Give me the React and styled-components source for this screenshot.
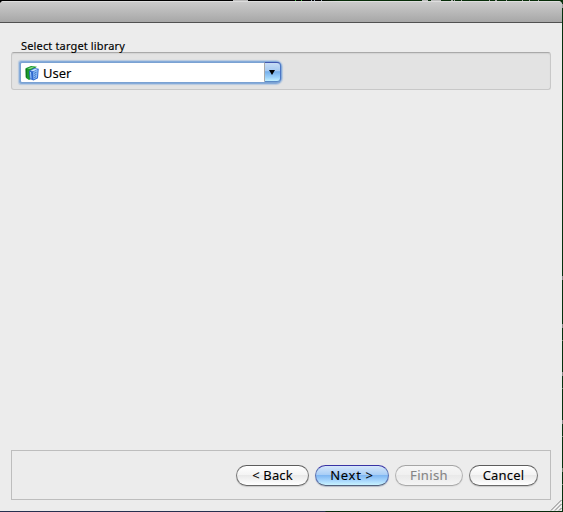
import React from "react";
import styled, { createGlobalStyle, css } from "styled-components";

const GlobalStyle = createGlobalStyle`
  * { box-sizing: border-box; }
  body { margin: 0; overflow: hidden; font-family: "Noto Sans", "Open Sans", sans-serif; color: #000; }
`;

const Desktop = styled.div`
  width: 563px;
  height: 512px;
  padding: 1px 1px 1px 0;
  background:
    linear-gradient(#888, #888) 562px 276px / 1px 4px no-repeat,
    linear-gradient(#888, #888) 562px 324px / 1px 4px no-repeat,
    linear-gradient(#888, #888) 562px 372px / 1px 4px no-repeat,
    linear-gradient(#888, #888) 562px 420px / 1px 4px no-repeat,
    linear-gradient(#698069, #698069) 562px 340px / 1px 1px no-repeat,
    linear-gradient(#698069, #698069) 562px 388px / 1px 1px no-repeat,
    linear-gradient(#698069, #698069) 562px 436px / 1px 1px no-repeat,
    linear-gradient(#698069, #698069) 562px 468px / 1px 4px no-repeat,
    linear-gradient(#698069, #698069) 562px 484px / 1px 1px no-repeat,
    linear-gradient(#999, #999) 562px 4px / 1px 4px no-repeat,
    linear-gradient(90deg, transparent 233px, #bbb 233px 248px, transparent 248px 295px,
      #4b4 295px 296px, transparent 296px 301px, #4b4 301px 302px, transparent 302px 311px,
      #9ab 311px 312px, transparent 312px 314px, #9ab 314px 315px, transparent 315px 321px,
      #9ab 321px 322px, transparent 322px 422px, #bbb 422px 428px, transparent 428px 431px,
      #bbb 431px 441px, transparent 441px 451px, #aaa 451px 453px, transparent 453px 454px,
      #aaa 454px 455px, transparent 455px 461px, #aaa 461px 462px, transparent 462px 489px,
      #aaa 489px 490px, transparent 490px 495px, #aaa 495px 497px, transparent 497px 506px,
      #aaa 506px 507px, transparent 507px 522px, #aaa 522px 523px, transparent 523px 529px,
      #aaa 529px 530px, transparent 530px 538px, #aaa 538px 539px, transparent 539px) 0 0 / 563px 1px no-repeat,
    linear-gradient(90deg, #000 320px, #062c08 340px) 0 0 / 562px 8px no-repeat,
    linear-gradient(90deg, #26304f 325px, #06280a 326px) 0 511px / 562px 1px no-repeat,
    #06300e;
`;

const Window = styled.main`
  position: relative;
  display: flex;
  flex-direction: column;
  height: 510px;
  background: #ececec;
  border-radius: 4px 4px 0 0;
  overflow: hidden;
`;

const TitleBar = styled.header`
  flex: none;
  height: 22px;
  background: linear-gradient(#cbcbcb, #a7a7a7);
  border-top: 1px solid #dedede;
  border-bottom: 1px solid #515151;
`;

const Content = styled.section`
  flex: 1;
  display: flex;
  flex-direction: column;
  padding: 16px 11px 11px;
`;

const GroupLabel = styled.label`
  position: relative;
  z-index: 1;
  height: 13px;
  padding-left: 10px;
  font-size: 11px;
  line-height: 14px;
  letter-spacing: 0.15px;
  -webkit-text-stroke: 0.15px;
  white-space: nowrap;
`;

const GroupBox = styled.div`
  height: 38px;
  padding: 10px 0 0 9px;
  background: #e3e3e3;
  border: 1px solid #c8c8c8;
  border-top-color: #a9a9a9;
  border-radius: 3px;
  box-shadow: inset 0 1px 1px #d3d3d3;
`;

const Combo = styled.div`
  display: flex;
  width: 259px;
  height: 19px;
  background: #fff;
  border-radius: 1px 4px 4px 1px;
  box-shadow: 0 0 0 1px #7ba2d3, 0 0 0 2px #86abd9, 0 0 1px 3px #b5c8df;
`;

const ComboValue = styled.div`
  flex: 1;
  display: flex;
  align-items: center;
  gap: 4px;
  padding-left: 4px;
  font-size: 13px;
  line-height: 18px;
  -webkit-text-stroke: 0.1px;
  white-space: nowrap;
`;

const ComboArrow = styled.button`
  display: flex;
  align-items: center;
  justify-content: center;
  width: 17px;
  height: 20px;
  margin: -1px -1px 0 0;
  padding: 0 2px 0 0;
  border: 1px solid #4b76c5;
  border-top-color: #4056b0;
  border-left-color: #a9a9a9;
  border-bottom-color: #5a8ac6;
  border-radius: 0 4px 4px 0;
  background: linear-gradient(#c7dcf5 0, #a4c8f1 45%, #75aeea 48%, #9dd2fa 80%, #c2f0ff 100%);
`;

const Spacer = styled.div`
  flex: 1;
`;

const Footer = styled.footer`
  display: flex;
  justify-content: flex-end;
  gap: 6px;
  height: 50px;
  padding: 14px 12px 0 0;
  border: 1px solid #bdbdbd;
`;

const looks = {
  normal: css`
    color: #000;
    border-color: #5d5d5d #777 #686868;
    background: linear-gradient(#fff 0, #f4f4f4 46%, #e9e9e9 50%, #f3f3f3 72%, #fff 100%);
    box-shadow: 0 1px 1px #c8c8c8;
  `,
  primary: css`
    color: #000;
    border-color: #3933a4 #5a70b0 #53617c;
    background: linear-gradient(#d5e6fa 0, #a9cef6 46%, #80b7f2 50%, #a5d4fc 75%, #c8f3ff 100%);
    box-shadow: 0 1px 1px #b4bcc8;
  `,
  disabled: css`
    color: #858585;
    border-color: #a5a5a5 #b2b2b2 #a9a9a9;
    background: linear-gradient(#f6f6f6 0, #f0f0f0 46%, #e9e9e9 50%, #f5f5f5 100%);
    box-shadow: 0 1px 1px #dedede;
  `,
};

const PushButton = styled.button`
  display: flex;
  align-items: center;
  justify-content: center;
  width: ${(p) => p.$width}px;
  height: 21px;
  padding: 0;
  border: 1px solid;
  border-radius: 11px;
  font: 13px/19px "Noto Sans", "Open Sans", sans-serif;
  letter-spacing: ${(p) => p.$tracking || 0}px;
  -webkit-text-stroke: 0.1px;
  white-space: nowrap;
  ${(p) => looks[p.$look || "normal"]}
`;

const ResizeGrip = styled.svg`
  position: absolute;
  right: 0;
  bottom: 0;
`;

function LibraryIcon() {
  return (
    <svg width="14" height="16" viewBox="0 0 14 16">
      <path d="M.5 3.200 6 1l6 .7-4 2.800-2 9.500-2 1-3-2z" fill="#1c9a2c" />
      <path d="M2.500 3.400 6.500 2l2.800.4L5 4z" fill="#8fd890" />
      <path d="M1.200 4v8.500" stroke="#0b6c1b" />
      <path d="m4 6 5-3 4.700.7L13 13.200 8.500 15.500 4.800 14z" fill="#2f68cf" />
      <path d="m5.300 5.900 4-2.200 3.200.5-4 2z" fill="#c5defa" />
      <path d="m5.500 7 .5 6.500" stroke="#a8d0fb" />
      <path d="m8.200 7 4.500-2.400-.6 8-3.600 1.800z" fill="#8dbff5" />
      <path d="m9.200 8.400 2.300-1.200M9.200 10.500l2.200-1.200M9.200 12.600l2-1.100" stroke="#2458b8" strokeWidth=".8" />
    </svg>
  );
}

export default function App() {
  return (
    <>
      <GlobalStyle />
      <Desktop>
        <Window>
          <TitleBar />
          <Content>
            <GroupLabel>Select target library</GroupLabel>
            <GroupBox>
              <Combo>
                <ComboValue>
                  <LibraryIcon />
                  <span>User</span>
                </ComboValue>
                <ComboArrow aria-label="Choose library">
                  <svg width="6" height="5" viewBox="0 0 6 5"><path d="M0 0h6L3 5z" fill="#000" /></svg>
                </ComboArrow>
              </Combo>
            </GroupBox>
            <Spacer />
            <Footer>
              <PushButton $width={73} $tracking={0.15}>&lt; Back</PushButton>
              <PushButton $width={74} $tracking={0.7} $look="primary">Next &gt;</PushButton>
              <PushButton $width={68} $tracking={0.35} $look="disabled" disabled>Finish</PushButton>
              <PushButton $width={69} $tracking={0.2}>Cancel</PushButton>
            </Footer>
          </Content>
          <ResizeGrip width="12" height="12" viewBox="0 0 12 12">
            <path d="M1 11.500 11.500 1M5 11.500 11.500 5M9 11.500 11.500 9" stroke="#777" fill="none" />
            <path d="M2.300 11.500 11.500 2.300M6.300 11.500 11.500 6.300" stroke="#fff" strokeWidth=".6" fill="none" />
          </ResizeGrip>
        </Window>
      </Desktop>
    </>
  );
}
